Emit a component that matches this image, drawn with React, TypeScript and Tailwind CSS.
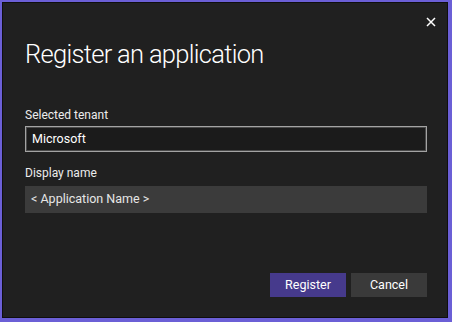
import React from "react";

export default function App() {
  return (
    <div
      className="w-[452px] h-[322px] bg-[#6b5fd6] pl-[2px] pt-[2px] pr-[4px] pb-[4px]"
      style={{ fontFamily: 'Roboto, "Noto Sans", sans-serif' }}
    >
      <div className="relative w-full h-full bg-[#202020] border border-[#0e0e0e] text-white flex flex-col pl-[22px] pr-[20px]">
        <button className="absolute right-[10px] top-[13px] w-[12px] h-[12px] flex items-center justify-center text-white">
          <svg width="10" height="10" viewBox="0 0 10 10">
            <path d="M1 1 L9 9 M9 1 L1 9" stroke="currentColor" strokeWidth="1.5" />
          </svg>
        </button>
        <h1 className="mt-[35px] text-[25.5px] leading-[32px] font-light tracking-[-0.7px]">
          Register an application
        </h1>
        <label className="mt-[37px] text-[12px] leading-[16px] text-[#ececec]">Selected tenant</label>
        <div className="mt-[3px] h-[26px] border border-[#a3a3a3] shadow-[inset_0_0_0_1px_#4a4a4a] bg-[#1b1b1b] flex items-center px-[6px] text-[12.5px]">
          Microsoft
        </div>
        <label className="mt-[13px] text-[12px] leading-[16px] text-[#ececec]">Display name</label>
        <div className="mt-[5px] h-[27px] bg-[#3b3b3b] flex items-center px-[6px] text-[12.5px] text-[#e6e6e6]">
          &lt; Application Name &gt;
        </div>
        <div className="mt-auto mb-[20px] flex justify-end gap-[5px]">
          <button className="w-[76px] h-[24px] bg-[#463a8c] text-[12.5px] text-white">Register</button>
          <button className="w-[76px] h-[24px] bg-[#3a3a3a] text-[12.5px] text-white">Cancel</button>
        </div>
      </div>
    </div>
  );
}
